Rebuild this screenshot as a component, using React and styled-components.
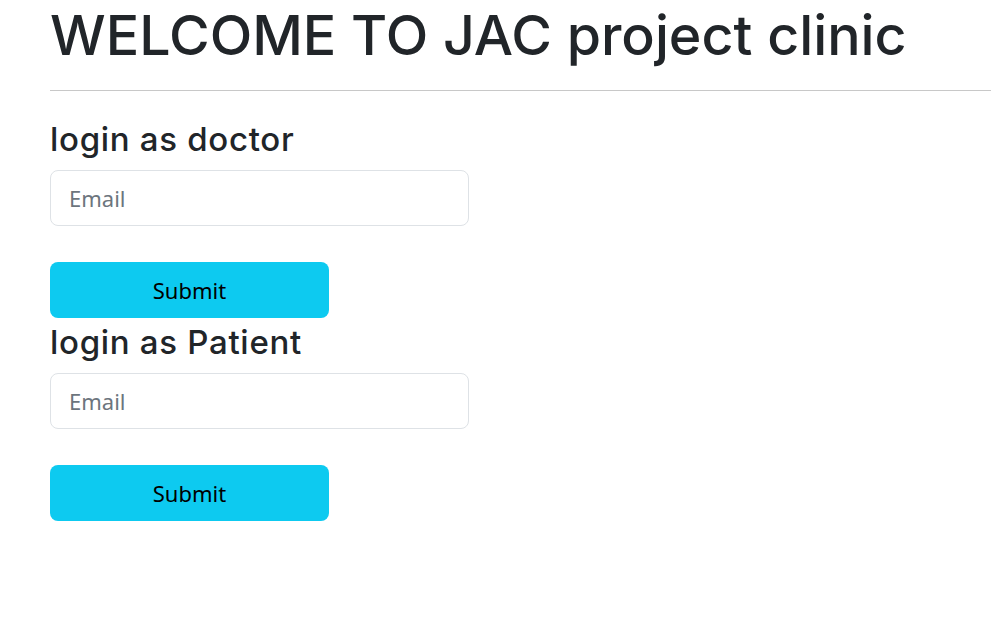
import styled, { createGlobalStyle } from "styled-components"

const GlobalStyle = createGlobalStyle`
    body {
        margin: 0;
        background: #fff;
        font-family: "Noto Sans", "Open Sans", sans-serif;
        color: #212529;
    }
`

export default function App() {
    return (
        <>
            <GlobalStyle />
            <Page>
                <Title>WELCOME TO JAC project clinic</Title>
                <Divider />
                <LoginForm title="login as doctor" />
                <LoginForm title="login as Patient" />
            </Page>
        </>
    )
}

function LoginForm({ title }) {
    return (
        <Section>
            <SectionTitle>{title}</SectionTitle>
            <EmailInput placeholder="Email" type="email" />
            <SubmitButton>Submit</SubmitButton>
        </Section>
    )
}

const Page = styled.div`
    padding-left: 50px;
    display: flex;
    flex-direction: column;
`
const Title = styled.h1`
    margin: 0;
    font-family: Inter, "Noto Sans", sans-serif;
    font-size: 55.5px;
    font-weight: 500;
    line-height: 70px;
    white-space: nowrap;
`
const Divider = styled.hr`
    margin: 20px 0 24px;
    border: 0;
    border-top: 1px solid #c8c8c8;
`
const Section = styled.div`
    display: flex;
    flex-direction: column;
    align-items: flex-start;
`
const SectionTitle = styled.h2`
    margin: 0 0 7px;
    font-family: Inter, "Noto Sans", sans-serif;
    font-size: 33px;
    font-weight: 500;
    letter-spacing: 0.7px;
    line-height: 48px;
`
const EmailInput = styled.input`
    box-sizing: border-box;
    width: 419px;
    height: 56px;
    padding: 0 18px;
    border: 1px solid #dee2e6;
    border-radius: 8px;
    font-family: inherit;
    font-size: 22px;
    color: #212529;
    outline: none;
    &::placeholder {
        color: #6c757d;
    }
`
const SubmitButton = styled.button`
    margin-top: 36px;
    width: 279px;
    height: 56px;
    border: 0;
    border-radius: 8px;
    background: #0dcaf0;
    font-family: inherit;
    font-size: 22px;
    color: #000;
    cursor: pointer;
`
